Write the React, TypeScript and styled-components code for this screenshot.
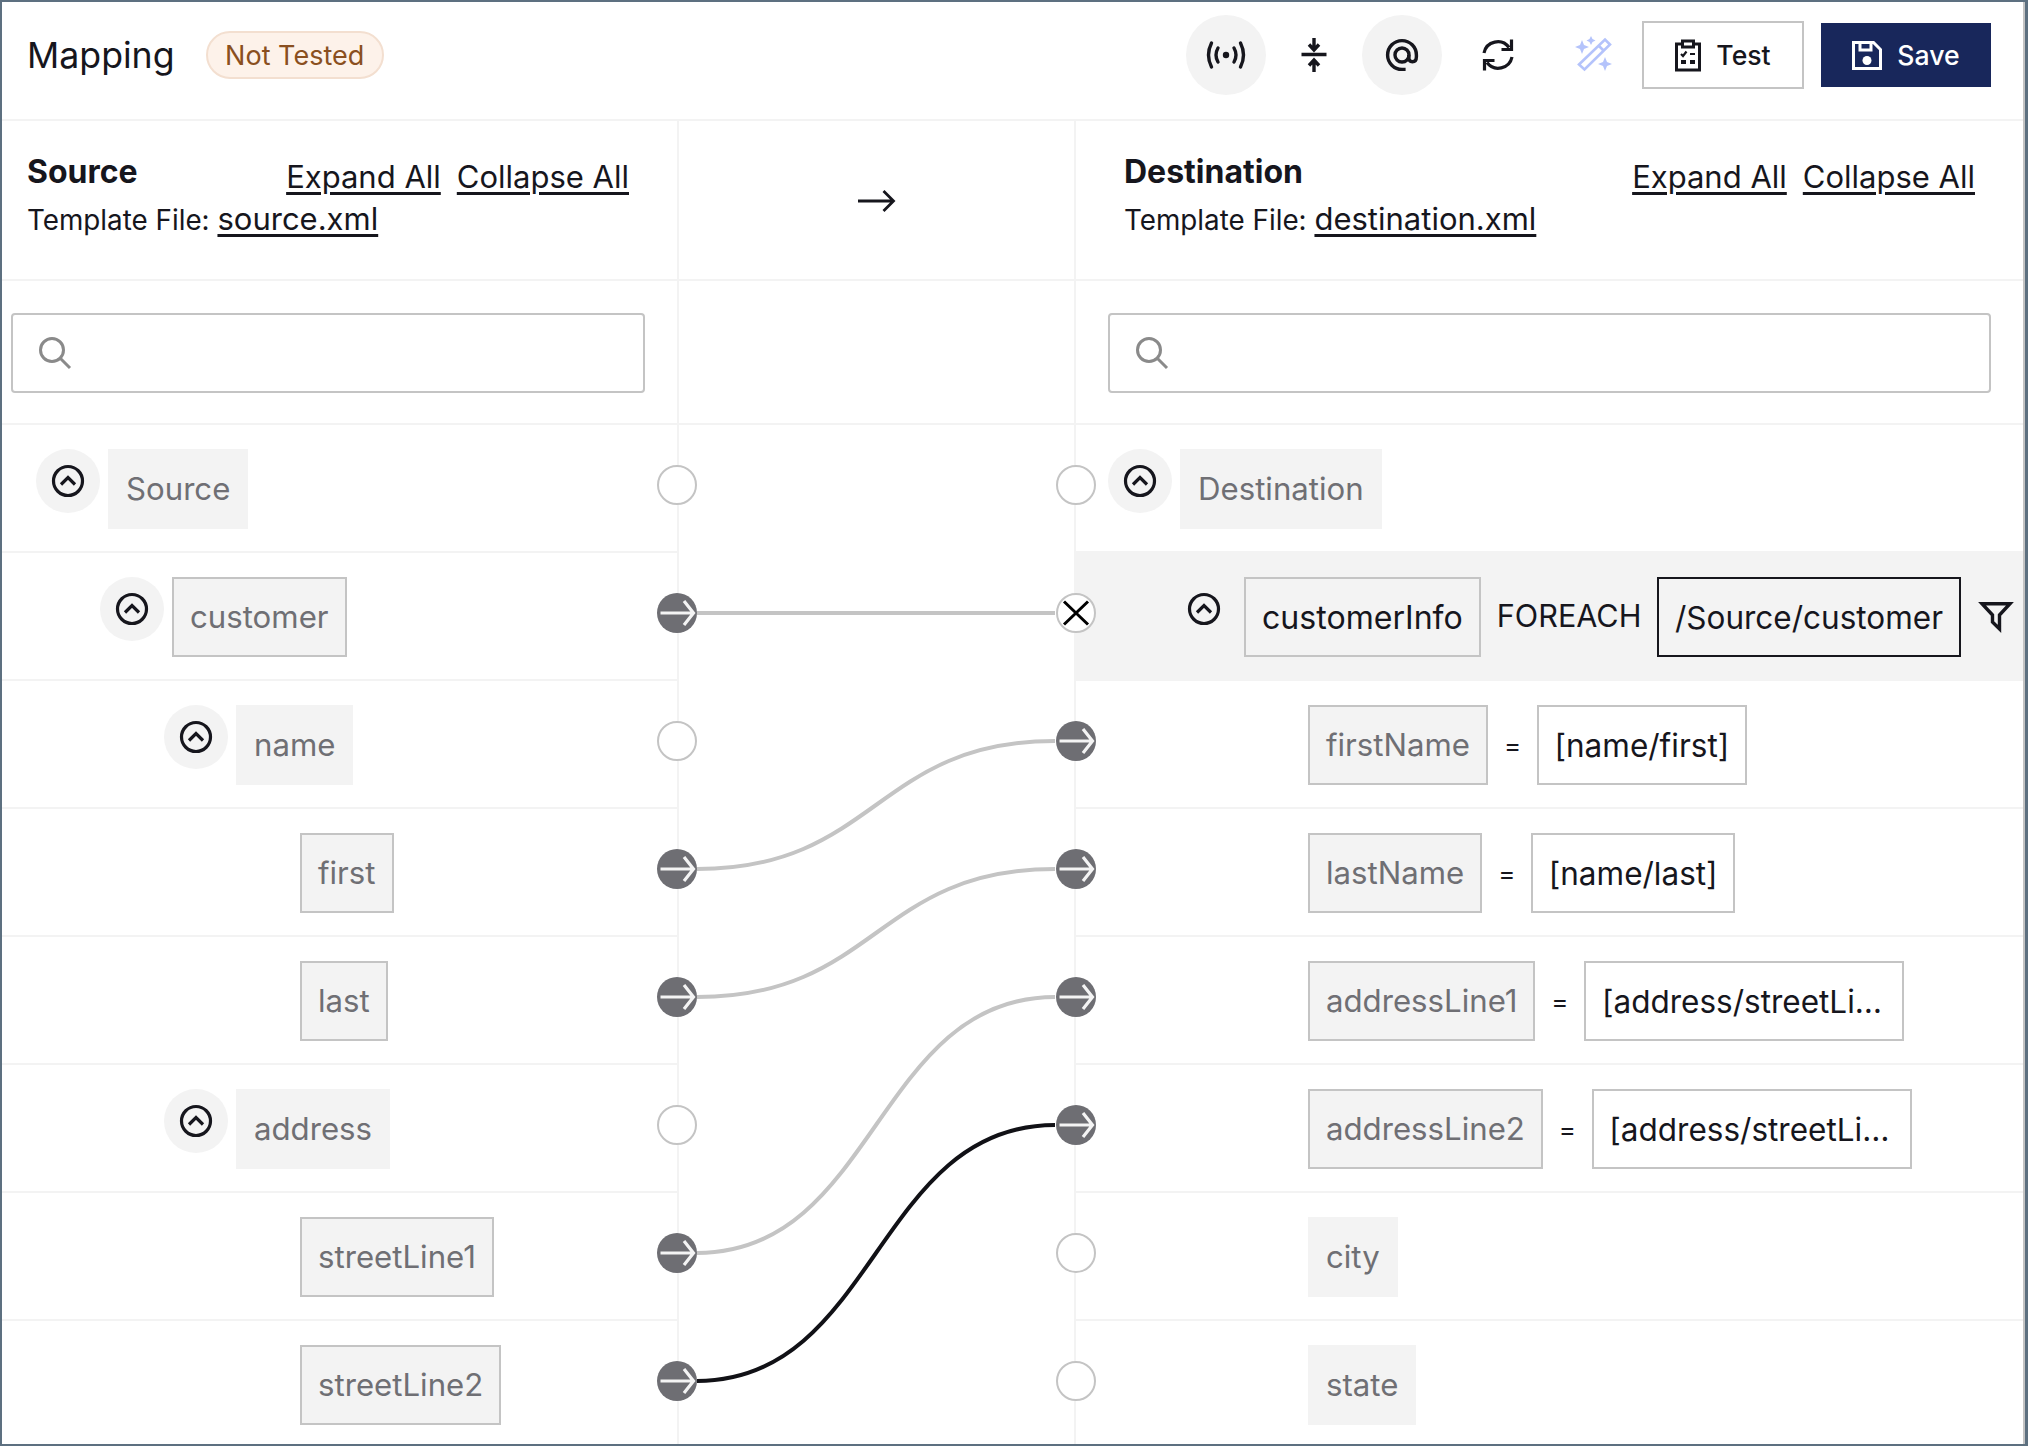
import React from 'react'
import styled, { createGlobalStyle } from 'styled-components'

const INK = '#16161d'
const LINE = '#f3f3f3'
const EDGE = '#c4c4c4'
const MUTED = '#6f6f74'

const sourceRows = [
  { name: 'Source', level: 0, toggle: true, boxed: false, linked: false },
  { name: 'customer', level: 1, toggle: true, boxed: true, linked: true },
  { name: 'name', level: 2, toggle: true, boxed: false, linked: false },
  { name: 'first', level: 3, toggle: false, boxed: true, linked: true },
  { name: 'last', level: 3, toggle: false, boxed: true, linked: true },
  { name: 'address', level: 2, toggle: true, boxed: false, linked: false },
  { name: 'streetLine1', level: 3, toggle: false, boxed: true, linked: true },
  { name: 'streetLine2', level: 3, toggle: false, boxed: true, linked: true },
]

const destRows = [
  { name: 'firstName', value: '[name/first]', linked: true },
  { name: 'lastName', value: '[name/last]', linked: true },
  { name: 'addressLine1', value: '[address/streetLine1]', linked: true },
  { name: 'addressLine2', value: '[address/streetLine2]', linked: true },
  { name: 'city', value: '', linked: false },
  { name: 'state', value: '', linked: false },
]

const links = [
  { from: 1, to: 1, active: false },
  { from: 3, to: 2, active: false },
  { from: 4, to: 3, active: false },
  { from: 6, to: 4, active: false },
  { from: 7, to: 5, active: true },
]

const rowCenter = (i: number) => 60 + i * 128

const ChevronIcon = () => (
  <svg width="34" height="34" viewBox="0 0 34 34" fill="none" stroke={INK} strokeWidth="3.2">
    <circle cx="17" cy="17" r="14.5" />
    <path d="M10 20.5 L17 13.5 L24 20.5" />
  </svg>
)

const ArrowIcon = () => (
  <svg width="40" height="40" viewBox="0 0 40 40" fill="none" stroke="#f4f4f4" strokeWidth="3.2">
    <path d="M3.5 20 H36 M27 8 L36.5 20 L27 32" />
  </svg>
)

const CrossIcon = () => (
  <svg width="36" height="36" viewBox="0 0 36 36" fill="none" stroke="#000" strokeWidth="3">
    <path d="M6 6.5 L30 29.5 M30 6.5 L6 29.5" />
  </svg>
)

const SearchIcon = () => (
  <svg width="34" height="34" viewBox="0 0 34 34" fill="none" stroke="#8a8a8a" strokeWidth="3">
    <circle cx="14" cy="14" r="11.5" />
    <path d="M22.5 22.5 L32 32" />
  </svg>
)

const BroadcastIcon = () => (
  <svg width="40" height="40" viewBox="0 0 40 40" fill="none" stroke={INK} strokeWidth="3.4" strokeLinecap="round">
    <circle cx="20" cy="20" r="3.2" fill={INK} stroke="none" />
    <path d="M5.5 8 Q-0.5 20 5.5 32 M12 13 Q8 20 12 27 M34.5 8 Q40.5 20 34.5 32 M28 13 Q32 20 28 27" />
  </svg>
)

const CompressIcon = () => (
  <svg width="40" height="40" viewBox="0 0 40 40" fill="none" stroke={INK} strokeWidth="3.4">
    <path d="M7.5 19.5 H32.5 M20 3 V14 M15 9.5 L20 15 L25 9.5 M20 37 V26 M15 30.5 L20 25 L25 30.5" />
  </svg>
)

const AtIcon = () => (
  <svg width="36" height="36" viewBox="0 0 40 40" fill="none" stroke={INK} strokeWidth="3.8">
    <path d="M24 36 H20 A16 16 0 1 1 36 20 V22 Q36 27.5 31.5 27.5 Q27.5 27.5 27.5 22 V20" />
    <circle cx="20" cy="20" r="7.8" />
  </svg>
)

const RefreshIcon = () => (
  <svg width="34" height="34" viewBox="0 0 34 34" fill="none" stroke={INK} strokeWidth="3.2">
    <path d="M3 15 A14 14 0 0 1 28 9.5 M30.5 1.5 V11.5 H20.5 M31 19 A14 14 0 0 1 6 24.5 M3.5 32.5 V22.5 H13.5" />
  </svg>
)

const WandIcon = () => (
  <svg width="38" height="38" viewBox="0 0 38 38" fill="none" stroke="#b4c3fb" strokeWidth="2.6">
    <path d="M4 28.5 L30 3.5 L35 8.5 L9.5 33.5 Z M23.5 9.5 L29 15" />
    <path d="M7 4 L9 9 L14 11 L9 13 L7 18 L5 13 L0 11 L5 9 Z" fill="#b4c3fb" stroke="none" />
    <path d="M16 0 L17.5 3 L20.5 4.5 L17.5 6 L16 9 L14.5 6 L11.5 4.5 L14.5 3 Z" fill="#b4c3fb" stroke="none" />
    <path d="M30 21 L32 26 L37 28 L32 30 L30 35 L28 30 L23 28 L28 26 Z" fill="#b4c3fb" stroke="none" />
  </svg>
)

const ClipboardIcon = () => (
  <svg width="26" height="33" viewBox="0 0 26 33" fill="none" stroke={INK} strokeWidth="3">
    <path d="M7.5 5 H1.5 V31 H24.5 V5 H18.5" />
    <path d="M7.5 8 V2 H18.5 V8 Z" />
    <path d="M6 15 L8 17 L11.5 12.5 M15 15 H20" strokeWidth="2.2" />
    <path d="M6 23 H11 M15 23 H20" strokeWidth="4" />
  </svg>
)

const SaveIcon = () => (
  <svg width="30" height="29" viewBox="0 0 30 29" fill="none" stroke="#fff" strokeWidth="3">
    <path d="M1.5 1.5 H21.5 L28.5 8.5 V27.5 H1.5 Z" />
    <path d="M8 1.5 V9 H19 V1.5" />
    <circle cx="15" cy="19.5" r="4.5" fill="#fff" stroke="none" />
  </svg>
)

const LongArrowIcon = () => (
  <svg width="38" height="24" viewBox="0 0 38 24" fill="none" stroke={INK} strokeWidth="2.8">
    <path d="M0 12 H35 M25.5 2 L35.5 12 L25.5 22" />
  </svg>
)

const FilterIcon = () => (
  <svg width="34" height="30" viewBox="0 0 34 30" fill="none" stroke={INK} strokeWidth="3.4">
    <path d="M3 1.7 H31 L20.5 13 V27 L13.5 20 V13 Z" />
  </svg>
)

const App = () => (
  <Frame>
    <GlobalStyle />
    <Page>
      <TopBar>
        <TitleGroup>
          <Heading>Mapping</Heading>
          <StatusPill>Not Tested</StatusPill>
        </TitleGroup>
        <Actions>
          <RoundButton $filled>
            <BroadcastIcon />
          </RoundButton>
          <RoundButton>
            <CompressIcon />
          </RoundButton>
          <RoundButton $filled $wide>
            <AtIcon />
          </RoundButton>
          <RoundButton $wide>
            <RefreshIcon />
          </RoundButton>
          <RoundButton $wide>
            <WandIcon />
          </RoundButton>
          <TestButton>
            <ClipboardIcon />
            Test
          </TestButton>
          <SaveButton>
            <SaveIcon />
            Save
          </SaveButton>
        </Actions>
      </TopBar>

      <Columns>
        <PanelHead>
          <TitleRow>
            <PanelTitle>Source</PanelTitle>
            <LinkRow>
              <FileLink>Expand All</FileLink>
              <FileLink>Collapse All</FileLink>
            </LinkRow>
          </TitleRow>
          <TemplateLine>
            Template File: <FileLink>source.xml</FileLink>
          </TemplateLine>
        </PanelHead>
        <MiddleHead>
          <LongArrowIcon />
        </MiddleHead>
        <PanelHead $dest>
          <TitleRow>
            <PanelTitle>Destination</PanelTitle>
            <LinkRow>
              <FileLink>Expand All</FileLink>
              <FileLink>Collapse All</FileLink>
            </LinkRow>
          </TitleRow>
          <TemplateLine>
            Template File: <FileLink>destination.xml</FileLink>
          </TemplateLine>
        </PanelHead>
      </Columns>

      <Columns>
        <SearchCell>
          <SearchBox>
            <SearchIcon />
          </SearchBox>
        </SearchCell>
        <MiddleSearch />
        <SearchCell $dest>
          <SearchBox>
            <SearchIcon />
          </SearchBox>
        </SearchCell>
      </Columns>

      <Columns>
        <Tree>
          {sourceRows.map(row => (
            <Row key={row.name} $indent={34 + row.level * 64}>
              <Toggle $hidden={!row.toggle}>
                <ChevronIcon />
              </Toggle>
              <Label $boxed={row.boxed}>{row.name}</Label>
              <SourceNode $linked={row.linked}>{row.linked && <ArrowIcon />}</SourceNode>
            </Row>
          ))}
        </Tree>

        <Wires>
          <WireLayer width="396" height="1020">
            {links.map(link => {
              const y1 = rowCenter(link.from)
              const y2 = rowCenter(link.to)
              return (
                <path
                  key={link.from}
                  d={`M18 ${y1} C197 ${y1} 197 ${y2} 376 ${y2}`}
                  fill="none"
                  stroke={link.active ? '#111116' : EDGE}
                  strokeWidth="4"
                />
              )
            })}
          </WireLayer>
        </Wires>

        <Tree $dest>
          <Row $indent={32}>
            <Toggle>
              <ChevronIcon />
            </Toggle>
            <Label>Destination</Label>
            <DestNode />
          </Row>
          <Row $indent={96} $active>
            <Toggle $bare>
              <ChevronIcon />
            </Toggle>
            <Label $boxed $strong>
              customerInfo
            </Label>
            <Keyword>FOREACH</Keyword>
            <ValueBox $selected>/Source/customer</ValueBox>
            <FilterSlot>
              <FilterIcon />
            </FilterSlot>
            <DestNode>
              <CrossIcon />
            </DestNode>
          </Row>
          {destRows.map(row => (
            <Row key={row.name} $indent={232}>
              <Label $boxed={row.linked}>{row.name}</Label>
              {row.value && (
                <>
                  <Equals>=</Equals>
                  <ValueBox>
                    <ValueText>{row.value}</ValueText>
                  </ValueBox>
                </>
              )}
              <DestNode $linked={row.linked}>{row.linked && <ArrowIcon />}</DestNode>
            </Row>
          ))}
        </Tree>
      </Columns>
    </Page>
  </Frame>
)

export default App

const GlobalStyle = createGlobalStyle`
  html, body {
    margin: 0;
    padding: 0;
    background: #fff;
  }
  body {
    font-family: Inter, "Liberation Sans", sans-serif;
    color: ${INK};
  }
  svg {
    display: block;
    overflow: visible;
  }
`

const Frame = styled.div`
  box-sizing: border-box;
  width: 2028px;
  height: 1446px;
  overflow: hidden;
  border: 2px solid #5d7080;
  border-right-width: 3px;
  background: #fff;
`
const Page = styled.div`
  box-sizing: border-box;
  height: 100%;
  overflow: hidden;
  border-right: 2px solid ${EDGE};
`
const TopBar = styled.div`
  box-sizing: border-box;
  height: 119px;
  display: flex;
  align-items: center;
  justify-content: space-between;
  padding: 0 32px 11px 25px;
  border-bottom: 2px solid ${LINE};
`
const TitleGroup = styled.div`
  display: flex;
  align-items: center;
  gap: 31px;
`
const Heading = styled.div`
  font-size: 35.7px;
  line-height: 48px;
`
const StatusPill = styled.div`
  box-sizing: border-box;
  height: 48px;
  padding: 0 17.5px;
  display: flex;
  align-items: center;
  border: 2px solid #f3dfd0;
  border-radius: 24px;
  background: #fdf2ea;
  color: #8a4f20;
  font-size: 27px;
`
const Actions = styled.div`
  display: flex;
  align-items: center;
`
const RoundButton = styled.div<{ $filled?: boolean; $wide?: boolean }>`
  width: 80px;
  height: 80px;
  margin-right: ${p => (p.$wide ? 16 : 8)}px;
  display: flex;
  align-items: center;
  justify-content: center;
  border-radius: 50%;
  background: ${p => (p.$filled ? LINE : 'transparent')};
`
const TestButton = styled.div`
  box-sizing: border-box;
  width: 162px;
  height: 68px;
  margin-left: -8px;
  margin-right: 17px;
  display: flex;
  align-items: center;
  justify-content: center;
  gap: 15px;
  border: 2.5px solid ${EDGE};
  font-size: 26.6px;
  font-weight: 500;
`
const SaveButton = styled.div`
  box-sizing: border-box;
  width: 170px;
  height: 64px;
  display: flex;
  align-items: center;
  justify-content: center;
  gap: 15px;
  background: #18275b;
  color: #fff;
  font-size: 26.6px;
  font-weight: 500;
`
const Columns = styled.div`
  display: grid;
  grid-template-columns: 677px 395px 1fr;
`
const PanelHead = styled.div<{ $dest?: boolean }>`
  box-sizing: border-box;
  height: 160px;
  padding: 31px 48px 0 ${p => (p.$dest ? 48 : 25)}px;
  border-bottom: 2px solid ${LINE};
  white-space: nowrap;
  ${p => (p.$dest ? `border-left: 2px solid ${LINE};` : `border-right: 2px solid ${LINE};`)}
`
const TitleRow = styled.div`
  display: flex;
  justify-content: space-between;
  align-items: flex-start;
  margin-bottom: 2px;
`
const MiddleHead = styled.div`
  box-sizing: border-box;
  height: 160px;
  padding-top: 2px;
  display: flex;
  align-items: center;
  justify-content: center;
  border-bottom: 2px solid ${LINE};
`
const PanelTitle = styled.div`
  font-size: 32px;
  font-weight: 700;
  line-height: 40px;
`
const TemplateLine = styled.div`
  font-size: 27.8px;
  line-height: 40px;
`
const FileLink = styled.span`
  font-size: 31px;
  text-decoration: underline;
  text-decoration-thickness: 3px;
  text-underline-offset: 4px;
`
const LinkRow = styled.div`
  display: flex;
  gap: 16px;
  margin-top: 5px;
  line-height: 40px;
`
const SearchCell = styled.div<{ $dest?: boolean }>`
  box-sizing: border-box;
  height: 144px;
  padding: 32px ${p => (p.$dest ? '32px 0 32px' : '32px 0 9px')};
  border-bottom: 2px solid ${LINE};
  ${p => (p.$dest ? `border-left: 2px solid ${LINE};` : `border-right: 2px solid ${LINE};`)}
`
const MiddleSearch = styled.div`
  height: 142px;
  border-bottom: 2px solid ${LINE};
`
const SearchBox = styled.div`
  box-sizing: border-box;
  height: 80px;
  display: flex;
  align-items: center;
  padding-left: 25px;
  border: 2px solid ${EDGE};
  border-radius: 4px;
`
const Tree = styled.div<{ $dest?: boolean }>`
  ${p => (p.$dest ? `border-left: 2px solid ${LINE};` : `border-right: 2px solid ${LINE};`)}
`
const Row = styled.div<{ $indent: number; $active?: boolean }>`
  position: relative;
  box-sizing: border-box;
  height: 128px;
  display: flex;
  align-items: flex-start;
  padding: 24px 0 0 ${p => p.$indent}px;
  border-bottom: 2px solid ${LINE};
  background: ${p => (p.$active ? LINE : 'transparent')};
`
const Toggle = styled.div<{ $hidden?: boolean; $bare?: boolean }>`
  flex: none;
  width: 64px;
  height: 64px;
  margin-right: 8px;
  display: flex;
  align-items: center;
  justify-content: center;
  border-radius: 50%;
  background: ${p => (p.$bare ? 'transparent' : LINE)};
  visibility: ${p => (p.$hidden ? 'hidden' : 'visible')};
`
const Label = styled.div<{ $boxed?: boolean; $strong?: boolean }>`
  box-sizing: border-box;
  flex: none;
  height: 80px;
  padding: 0 16px;
  display: flex;
  align-items: center;
  border: 2px solid ${p => (p.$boxed ? EDGE : LINE)};
  background: ${LINE};
  color: ${p => (p.$strong ? INK : MUTED)};
  font-size: ${p => (p.$strong ? 32.1 : 31.2)}px;
`
const Keyword = styled.div`
  height: 76px;
  margin: 0 16px;
  display: flex;
  align-items: center;
  font-size: 30.6px;
`
const ValueBox = styled.div<{ $selected?: boolean }>`
  box-sizing: border-box;
  flex: none;
  max-width: 320px;
  height: 80px;
  padding: 0 15.5px;
  display: flex;
  align-items: center;
  border: 2px solid ${p => (p.$selected ? INK : EDGE)};
  background: ${p => (p.$selected ? LINE : '#fff')};
  font-size: 31.5px;
`
const ValueText = styled.span`
  overflow: hidden;
  white-space: nowrap;
  text-overflow: ellipsis;
`
const Equals = styled.div`
  width: 18px;
  height: 80px;
  margin: 0 15.5px;
  display: flex;
  align-items: center;
  justify-content: center;
  font-size: 26px;
`
const FilterSlot = styled.div`
  margin: 25px 0 0 18px;
`
const Node = styled.div<{ $linked?: boolean }>`
  position: absolute;
  top: 40px;
  z-index: 2;
  box-sizing: border-box;
  width: 40px;
  height: 40px;
  display: flex;
  align-items: center;
  justify-content: center;
  border-radius: 50%;
  border: ${p => (p.$linked ? 'none' : `2px solid ${EDGE}`)};
  background: ${p => (p.$linked ? '#6e6e73' : '#fff')};
`
const SourceNode = styled(Node)`
  right: -20px;
`
const DestNode = styled(Node)`
  left: -20px;
`
const Wires = styled.div`
  position: relative;
`
const WireLayer = styled.svg`
  position: absolute;
  top: 0;
  left: 0;
  z-index: 1;
`
